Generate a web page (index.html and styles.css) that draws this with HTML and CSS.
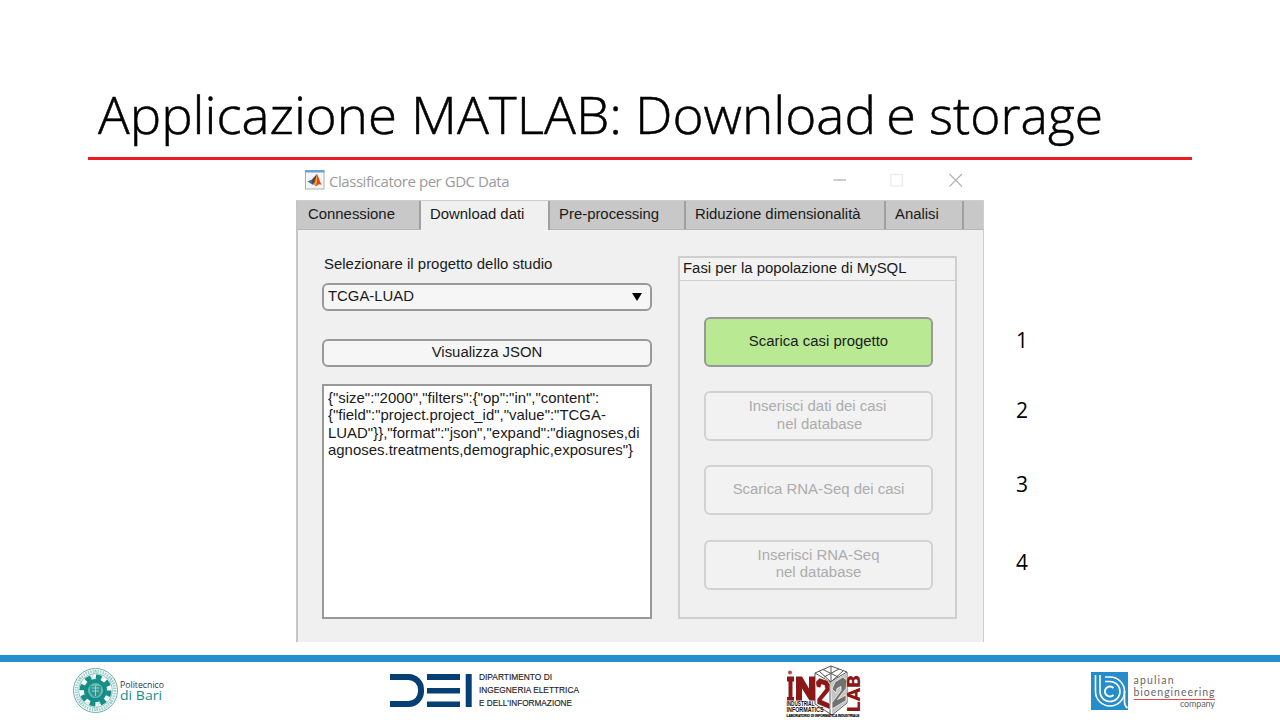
FILE: index.html
```html
<!DOCTYPE html>
<html lang="it">
<head>
<meta charset="utf-8">
<title>Applicazione MATLAB: Download e storage</title>
<link rel="stylesheet" href="styles.css">
</head>
<body>
<div class="slide">
  <header class="slide-header">
    <svg class="title" width="1104" height="77" viewBox="88 80 1104 77" role="heading">
      <text x="98" y="133.5" textLength="299" lengthAdjust="spacingAndGlyphs">Applicazione</text>
      <text x="411" y="133.5" textLength="211" lengthAdjust="spacingAndGlyphs">MATLAB:</text>
      <text x="635" y="133.5" textLength="241" lengthAdjust="spacingAndGlyphs">Download</text>
      <text x="886" y="133.5" textLength="30" lengthAdjust="spacingAndGlyphs">e</text>
      <text x="929" y="133.5" textLength="174" lengthAdjust="spacingAndGlyphs">storage</text>
    </svg>
  </header>

  <main class="content">
    <section class="window">
      <div class="titlebar">
        <svg class="app-icon" width="20" height="20" viewBox="0 0 20 20">
          <rect x=".5" y=".5" width="18.5" height="18.5" fill="#f3f5f7" stroke="#a9b1b8"/>
          <rect x="0" y="0" width="19.5" height="2.500" fill="#6aa5cf"/>
          <path d="M2.500 11.500 7 9.500l3 3-2.700 2z" fill="#2675a8"/>
          <path d="M7 9.500 12 4l-1 8-3.700 2.500z" fill="#583b52"/>
          <path d="M12 4c1.800 3 2.800 8 4.800 11-2.500-1.800-4-.5-5.800 1.500-.8-1.800-1.800-2.300-3.700-2C10 12.500 10.500 7 12 4z" fill="#d84d20"/>
          <path d="M11.800 5c.7 4 .3 8-.8 11-.3-1.300-1.200-1.800-2.300-2C11 12 10.600 8 11.800 5z" fill="#f4a536"/>
        </svg>
        <span class="app-name">Classificatore per GDC Data</span>
        <svg class="controls" width="130" height="16" viewBox="0 0 130 16" fill="none">
          <path d="M.5 8H13" stroke="#aaa" stroke-width="1.200"/>
          <rect x="58" y="2.500" width="11.500" height="11.500" stroke="#ebebeb" stroke-width="1.300"/>
          <path d="M116.500 2 129 14.500M129 2 116.500 14.500" stroke="#b0b0b0" stroke-width="1.100"/>
        </svg>
      </div>
      <div class="frame">
        <nav class="tabs">
          <span class="tab t1">Connessione</span>
          <span class="tab t2 active">Download dati</span>
          <span class="tab t3">Pre-processing</span>
          <span class="tab t4">Riduzione dimensionalità</span>
          <span class="tab t5">Analisi</span>
        </nav>
        <div class="body">
          <div class="left">
            <label class="label">Selezionare il progetto dello studio</label>
            <div class="field select"><span>TCGA-LUAD</span>
              <svg width="10" height="8" viewBox="0 0 10 8"><path d="M0 0h10L5 8z"/></svg>
            </div>
            <div class="field json-button">Visualizza JSON</div>
            <div class="textarea">{"size":"2000","filters":{"op":"in","content":<br>{"field":"project.project_id","value":"TCGA-<br>LUAD"}},"format":"json","expand":"diagnoses,di<br>agnoses.treatments,demographic,exposures"}</div>
          </div>
          <div class="panel">
            <div class="panel-title">Fasi per la popolazione di MySQL</div>
            <div class="steps">
              <div class="step ready">Scarica casi progetto</div>
              <div class="step">Inserisci dati dei casi<br>&nbsp;nel database</div>
              <div class="step">Scarica RNA-Seq dei casi</div>
              <div class="step">Inserisci RNA-Seq<br>nel database</div>
            </div>
          </div>
        </div>
      </div>
    </section>
    <div class="numbers"><span>1</span><span>2</span><span>3</span><span>4</span></div>
  </main>

  <footer class="footer">
    <svg class="logo" width="96" height="58" viewBox="72 662 96 58">
      <g fill="none" stroke="#55aaa4">
        <circle cx="95.500" cy="690.500" r="22" stroke-width=".9"/>
        <circle cx="95.500" cy="690.500" r="19.300" stroke-width="3" stroke-dasharray="1.500 1" opacity=".55"/>
        <circle cx="95.500" cy="690.500" r="16.800" stroke-width=".7"/>
        <path d="M95.500 670 112 703H79zM95.500 711 79 678h33z" stroke-width=".5" opacity=".7"/>
      </g>
      <circle cx="95.500" cy="690.500" r="11.500" fill="#168e87"/>
      <circle cx="95.500" cy="690.500" r="13.500" fill="none" stroke="#168e87" stroke-width="5" stroke-dasharray="5.600 5"/>
      <circle cx="95.500" cy="690.500" r="7.500" fill="#6dbab4"/>
      <path d="M90 686h11v5q-1 5-5.500 6-4.500-1-5.500-6z" fill="#2c9690"/>
      <path d="M91.500 688h8M92 691h7M95.500 686v10" stroke="#b9e0dc" stroke-width=".8"/>
      <text class="poliba-a" x="120" y="688" textLength="44" lengthAdjust="spacingAndGlyphs">Politecnico</text>
      <text class="poliba-b" x="120" y="700" textLength="42" lengthAdjust="spacingAndGlyphs">di Bari</text>
    </svg>
    <svg class="logo" width="192" height="58" viewBox="389 662 192 58">
      <path d="M390 677h18.500a12.500 12.500 0 0 1 12.500 12.500v2a12.500 12.500 0 0 1-12.500 12.500H390" fill="none" stroke="#053f73" stroke-width="6"/>
      <path d="M427 674h33v6h-33zM427 688h33v5.500h-33zM427 701.500h33v5.500h-33zM465.700 674h6v33h-6z" fill="#053f73"/>
      <g class="dei-text">
        <text x="479" y="680" textLength="73" lengthAdjust="spacingAndGlyphs">DIPARTIMENTO DI</text>
        <text x="479" y="693" textLength="100" lengthAdjust="spacingAndGlyphs">INGEGNERIA ELETTRICA</text>
        <text x="479" y="705.500" textLength="93" lengthAdjust="spacingAndGlyphs">E DELL'INFORMAZIONE</text>
      </g>
    </svg>
    <svg class="logo" width="78" height="58" viewBox="785 662 78 58">
      <g fill="#fff" stroke="#555" stroke-width="1">
        <path d="M815 673 831 666l16 6v31l-15 12-17-11z"/>
        <path d="M815 673l15 9 17-10M830 682v32M823 669.500l15 7.500M839 669l-15 8M831 666v15M819 671l12 11M843 671l-12 11" fill="none"/>
      </g>
      <path d="M831 682l16-9v29l-15 12z" fill="#c4c4c4"/>
      <path d="M787 676.500h7v5h-1.500V697h1.500v3.500h-7V697h1.500v-15.500H787zM796 700.500v-24h6l7 12v-12h6v24h-5.500l-7.500-12v12z" fill="#8b1717"/>
      <path d="M815.500 682l4-4 8 2.500 2.500 4v6l-8 9.500 8 3.500v6l-13-5.500v-5l8-10-.5-3.500-3-1-1 3.500-4-1z" fill="#8b1717" stroke="#fff" stroke-width=".6"/>
      <path d="M832 689l3-7 8-5 4 3.500-1 8-8.500 11 8.500-4.500v5.500l-14 8.500v-6.500l9-12v-4l-4 2-1 4.500z" fill="#717171" stroke="#fff" stroke-width=".7"/>
      <circle cx="790" cy="672.500" r="2" fill="#b94a4a"/>
      <text transform="translate(860 712) rotate(-90)" class="lab" textLength="37" lengthAdjust="spacingAndGlyphs">LAB</text>
      <g class="industrial">
        <text x="786.500" y="706" textLength="28" lengthAdjust="spacingAndGlyphs">INDUSTRIAL</text>
        <text x="786.500" y="711.500" textLength="37" lengthAdjust="spacingAndGlyphs">INFORMATICS</text>
      </g>
      <text x="786.500" y="716.500" class="tiny" textLength="73" lengthAdjust="spacingAndGlyphs">LABORATORIO DI INFORMATICA INDUSTRIALE</text>
    </svg>
    <svg class="logo" width="130" height="58" viewBox="1090 662 130 58">
      <rect x="1091" y="672" width="37" height="38" fill="#258dcb"/>
      <g fill="none" stroke="#fff" stroke-width="1.600">
        <path d="M1095.500 675v16.500a14.500 14.500 0 0 0 29 0 14.500 14.500 0 0 0-14.500-14.500h-5"/>
        <path d="M1100 675v16.500a10 10 0 1 0 10-10h-5"/>
        <path d="M1124.500 691v11q0 4 3 6"/>
        <path d="M1113.500 688a5 5 0 1 0 0 7" stroke-width="1.900"/>
      </g>
      <path d="M1133.500 699.500H1215" stroke="#e8484e" stroke-width="1"/>
      <g class="apulian">
        <text x="1133.500" y="683.500" textLength="40" lengthAdjust="spacing">apulian</text>
        <text x="1133.500" y="696" textLength="81" lengthAdjust="spacing">bioengineering</text>
        <text x="1180" y="707" class="company" textLength="35" lengthAdjust="spacing">company</text>
      </g>
    </svg>
  </footer>
</div>
</body>
</html>
```
FILE: styles.css
```css
* { box-sizing: border-box; }
body { margin: 0; background: #fff; }
.slide {
  width: 1280px; height: 720px; overflow: hidden;
  display: flex; flex-direction: column;
  font-family: "Liberation Sans", Arial, sans-serif; color: #1a1a1a;
}
.slide-header {
  height: 160px; margin: 0 88px; padding-top: 80px;
  border-bottom: 3px solid #ed1c24;
}
.title { display: block; overflow: visible; }
.title text { font: 300 52px "Open Sans", "Noto Sans", sans-serif; fill: #000; stroke: #000; stroke-width: .5px; }

.content { flex: none; height: 495px; display: flex; padding-left: 296px; }
.window { width: 688px; height: 482px; display: flex; flex-direction: column; }
.titlebar { height: 40px; flex: none; display: flex; align-items: center; padding: 0 21px 0 9px; }
.app-name { margin-left: 4px; padding-top: 2px; font: 15px/20px "Open Sans", "Noto Sans", sans-serif; letter-spacing: -.46px; color: #9b9b9b; }
.controls { margin-left: auto; }
.frame {
  flex: 1; border: 1px solid #cdcdcd; border-left: 2px solid #c5c5c5; border-bottom: 0;
  background: #f0f0f0; display: flex; flex-direction: column;
}
.tabs { display: flex; height: 29px; flex: none; background: #c8c8c8; border-bottom: 1px solid #b5b5b5; font-size: 14.900px; line-height: 26px; white-space: nowrap; }
.tab { height: 28px; border-right: 2px solid #a0a0a0; padding-left: 10px; }
.tab.active { background: #f0f0f0; height: 29px; }
.t1 { width: 123px; }
.t2 { width: 129px; padding-left: 9px; }
.t3 { width: 136px; padding-left: 9px; }
.t4 { width: 200px; padding-left: 9px; }
.t5 { width: 78px; padding-left: 9px; }

.body { display: flex; padding: 26px 26px 0 24px; gap: 26px; }
.left { width: 330px; display: flex; flex-direction: column; }
.label { height: 27px; padding-left: 2px; font-size: 14.940px; line-height: 15px; }
.field {
  height: 28px; border: 2px solid #999; border-radius: 6px; background: #f6f6f6;
  font-size: 14.900px; line-height: 23px;
}
.select { display: flex; justify-content: space-between; align-items: center; padding: 0 8px 1px 4px; }
.json-button { margin-top: 28px; text-align: center; }
.textarea {
  margin-top: 17px; height: 235px; border: 2px solid #999; background: #fff;
  padding: 3px 4px 0; font-size: 14.940px; line-height: 17.400px; white-space: nowrap;
}
.panel { width: 279px; height: 363px; border: 2px solid #cfcfcf; }
.panel-title { height: 23px; border-bottom: 1px solid #cfcfcf; background: #f2f2f2; padding-left: 3px; font-size: 14.900px; line-height: 20px; }
.steps { display: flex; flex-direction: column; gap: 24.200px; padding: 36px 22px 0 24px; }
.step {
  height: 50px; border: 2px solid #d2d2d2; border-radius: 6px; background: #f2f2f2;
  color: #acacac; font-size: 14.930px; line-height: 17.500px; text-align: center;
  display: flex; align-items: center; justify-content: center; padding-bottom: 3px;
}
.step:nth-child(2) { padding-right: 2px; }
.step.ready { background: #b9e993; border-color: #999; color: #1a1a1a; }
.numbers {
  display: flex; flex-direction: column; margin-left: 32px; padding-top: 165px; gap: 40px;
  font: 21px/30px "Open Sans", "Noto Sans", sans-serif; color: #000;
}
.numbers span:nth-child(3) { margin-top: 4px; }
.numbers span:nth-child(4) { margin-top: 8px; }

.footer { height: 65px; flex: none; border-top: 7px solid #2490ce; display: flex; padding-left: 72px; }
.logo { flex: none; }
.logo + .logo { margin-left: 221px; }
.logo:nth-child(3) { margin-left: 204px; }
.logo:nth-child(4) { margin-left: 227px; }
.poliba-a { font: 500 9.500px "Open Sans", sans-serif; fill: #333; }
.poliba-b { font: 500 13px "Open Sans", sans-serif; fill: #168e87; }
.dei-text { font: 8.700px "Liberation Sans", sans-serif; fill: #222; stroke: #222; stroke-width: .15px; }
.lab { font: 900 18px Roboto, sans-serif; fill: #8b1717; }
.industrial { font: bold 6.500px "Liberation Sans", sans-serif; fill: #111; }
.tiny { font: bold 3.500px "Liberation Sans", sans-serif; fill: #111; stroke: #111; stroke-width: .2px; }
.apulian { font: 10.500px Lato, sans-serif; fill: #666; }
.company { font-size: 9px; }
```
